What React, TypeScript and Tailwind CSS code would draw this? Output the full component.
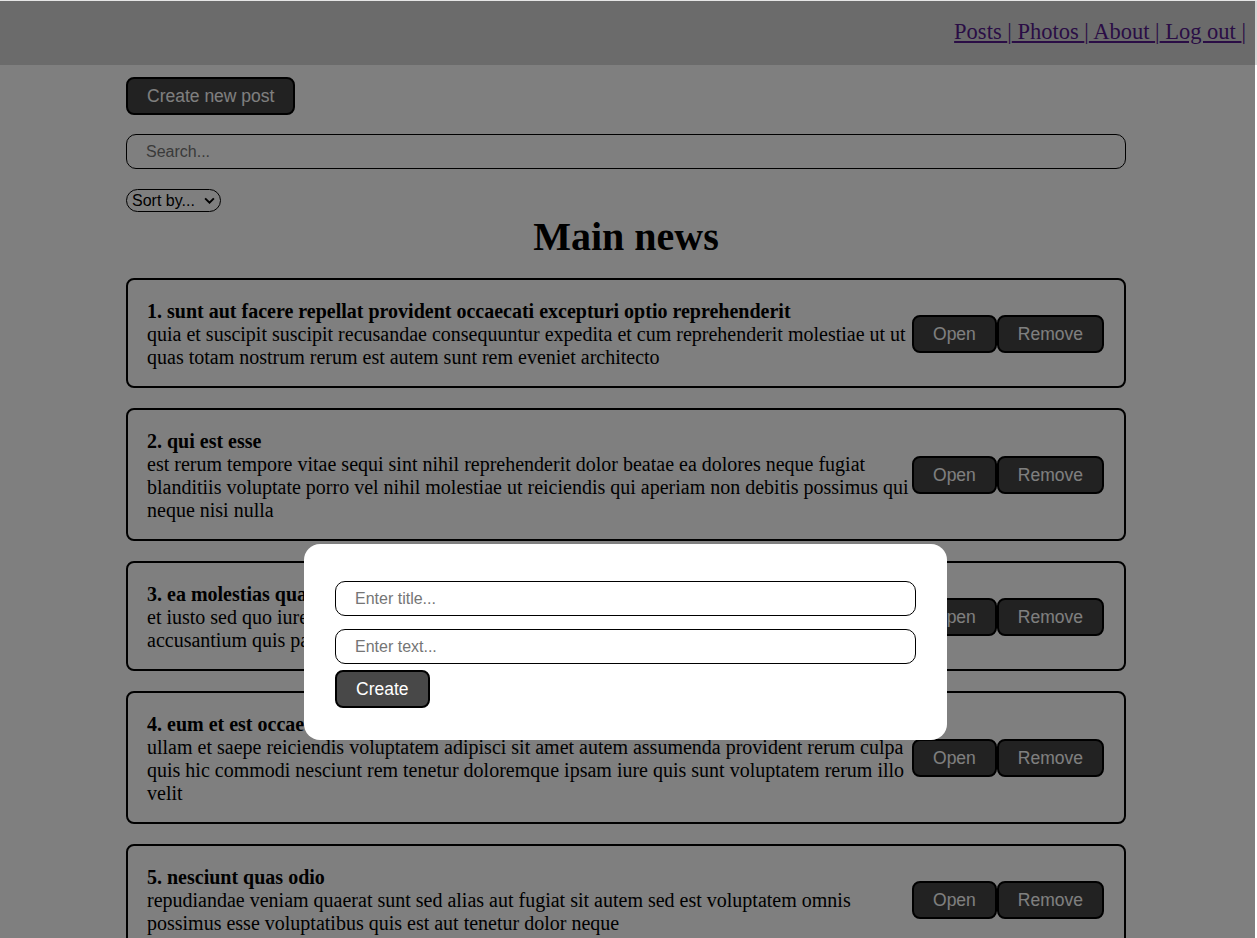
import { useState } from "react";

type Post = {
  readonly id: number;
  readonly title: string;
  readonly body: string;
};

const posts: Post[] = [
  {
    id: 1,
    title: "sunt aut facere repellat provident occaecati excepturi optio reprehenderit",
    body: "quia et suscipit suscipit recusandae consequuntur expedita et cum reprehenderit molestiae ut ut quas totam nostrum rerum est autem sunt rem eveniet architecto",
  },
  {
    id: 2,
    title: "qui est esse",
    body: "est rerum tempore vitae sequi sint nihil reprehenderit dolor beatae ea dolores neque fugiat blanditiis voluptate porro vel nihil molestiae ut reiciendis qui aperiam non debitis possimus qui neque nisi nulla",
  },
  {
    id: 3,
    title: "ea molestias quasi exercitationem repellat qui ipsa sit aut",
    body: "et iusto sed quo iure voluptatem occaecati omnis eligendi aut ad voluptatem doloribus vel accusantium quis pariatur molestiae porro eius odio et labore et velit aut",
  },
  {
    id: 4,
    title: "eum et est occaecati",
    body: "ullam et saepe reiciendis voluptatem adipisci sit amet autem assumenda provident rerum culpa quis hic commodi nesciunt rem tenetur doloremque ipsam iure quis sunt voluptatem rerum illo velit",
  },
  {
    id: 5,
    title: "nesciunt quas odio",
    body: "repudiandae veniam quaerat sunt sed alias aut fugiat sit autem sed est voluptatem omnis possimus esse voluptatibus quis est aut tenetur dolor neque",
  },
];

const btn =
  "rounded-lg border-2 border-black bg-[#444] px-[19px] py-[7px] text-[17.5px] leading-[20px] text-white font-['Liberation_Sans',Arial,sans-serif]";

const input =
  "block h-[35px] w-full rounded-[10px] border border-black px-[19px] text-[16px] font-['Liberation_Sans',Arial,sans-serif] outline-none placeholder:text-[#757575]";

const PostItem = ({ post }: { readonly post: Post }) => (
  <div className="flex items-center rounded-lg border-2 border-black px-[19px] pt-[20px] pb-[17px] font-['Liberation_Serif','Times_New_Roman',serif] text-[20px] leading-[23px] text-black">
    <div className="flex-1">
      <strong>
        {post.id}. {post.title}
      </strong>
      <div>{post.body}</div>
    </div>
    <div className="flex shrink-0 -translate-y-px pr-px">
      <button className={btn}>Open</button>
      <button className={btn}>Remove</button>
    </div>
  </div>
);

export default function App() {
  const [title, setTitle] = useState("");
  const [text, setText] = useState("");

  return (
    <div className="relative h-[938px] overflow-hidden border-t border-[#e6e6e6] bg-white">
      <nav className="flex h-[64px] items-center justify-end bg-[#d6d6d6] pr-[11px] pb-[2px] font-['Liberation_Serif','Times_New_Roman',serif] text-[22.5px] text-[#551a8b] whitespace-pre">
        <a href="#" className="underline">{"Posts "}</a>
        {"|"}
        <a href="#" className="underline">{" Photos "}</a>
        {"|"}
        <a href="#" className="underline">{" About "}</a>
        {"|"}
        <a href="#" className="underline">{" Log out "}</a>
        {"|"}
      </nav>

      <div className="ml-[126px] w-[1000px] pt-[12px]">
        <button className={btn}>Create new post</button>
        <input placeholder="Search..." className={`${input} mt-[19px]`} />
        <div className="relative mt-[20px] w-[95px]">
          <select className="block h-[23px] w-full appearance-none rounded-xl border border-black bg-transparent pl-[5px] text-[16px] leading-[19px] font-['Liberation_Sans',Arial,sans-serif]">
            <option>Sort by...</option>
            <option>By title</option>
            <option>By body</option>
          </select>
          <svg
            viewBox="0 0 12 8"
            className="pointer-events-none absolute top-[8px] right-[6px] h-[7px] w-[11px]"
            fill="none"
            stroke="black"
            strokeWidth={2.2}
          >
            <path d="M1 1.5l5 5 5-5" />
          </svg>
        </div>
        <h1 className="mt-[2px] text-center font-['Liberation_Serif','Times_New_Roman',serif] text-[40px] font-bold leading-[46px]">
          Main news
        </h1>
        <div className="mt-[18px] flex flex-col gap-[20px]">
          {posts.map((p) => (
            <PostItem key={p.id} post={p} />
          ))}
        </div>
      </div>

      <div className="fixed top-px right-[2px] bottom-0 left-0 bg-black/50">
        <div className="mt-[543px] ml-[304px] h-[196px] w-[643px] rounded-2xl bg-white px-[31px] pt-[37px]">
          <input
            value={title}
            onChange={(e) => setTitle(e.target.value)}
            placeholder="Enter title..."
            className={input}
          />
          <input
            value={text}
            onChange={(e) => setText(e.target.value)}
            placeholder="Enter text..."
            className={`${input} mt-[13px]`}
          />
          <button className={`${btn} mt-[6px] bg-[#484848]`}>Create</button>
        </div>
      </div>
    </div>
  );
}
